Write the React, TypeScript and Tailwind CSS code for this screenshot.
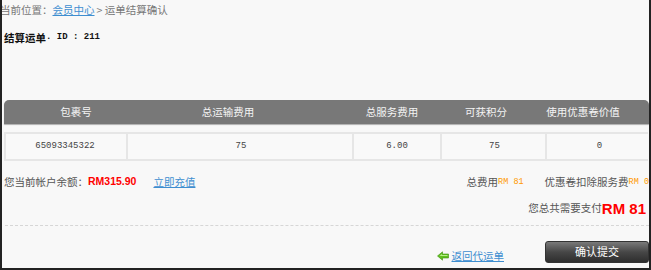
const cjk = "font-['Noto_Sans_CJK_SC','Liberation_Sans',sans-serif]";
const mono = "font-['Liberation_Mono','Noto_Sans_CJK_SC',monospace]";

function BackArrow() {
  return (
    <svg width="12" height="10" viewBox="0 0 12 10" className="shrink-0">
      <path d="M0.5 5 L5.5 0.8 L5.5 3 L11.5 3 L11.5 7 L5.5 7 L5.5 9.2 Z" fill="#5fbf1e" stroke="#3f8f10" strokeWidth="0.6" />
      <path d="M2.5 5 L5 3 L5 4 L10.5 4 L10.5 5 Z" fill="#b8ef8a" />
    </svg>
  );
}

export default function App() {
  return (
    <div className={`h-[270px] w-[651px] overflow-hidden border-b-2 border-l-2 border-r-2 border-[#222] bg-[#f8f8f8] ${cjk} text-[10.5px] text-[#555]`}>
      {/* breadcrumb */}
      <div className="-ml-[2px] flex h-[20px] items-center text-[#777]">
        <span>当前位置：</span>
        <a href="#" className="text-[#3e8ed0] underline">会员中心</a>
        <span className="ml-[2px]">&gt; 运单结算确认</span>
      </div>

      <div className="ml-[2px] mt-[10px] flex h-[15px] items-center font-bold text-[#111]">
        <span>结算运单</span>
        <span className={`${mono} text-[9px]`}>. ID : 211</span>
      </div>

      {/* table header */}
      <div className="ml-[2px] mt-[55px] flex h-[24px] w-[645px] items-center rounded-t-[5px] bg-[#787878] text-[#f4f4f4] shadow-[0_1px_1px_rgba(0,0,0,0.3)]">
        <div className="w-[144px] text-center">包裹号</div>
        <div className="w-[160px] text-center">总运输费用</div>
        <div className="ml-[42px] w-[84px] text-center">总服务费用</div>
        <div className="w-[104px] text-center">可获积分</div>
        <div className="w-[90px] text-center">使用优惠卷价值</div>
      </div>

      {/* data row */}
      <div className={`ml-[2px] mt-[8px] flex h-[29px] w-[644px] border-y-2 border-l-2 border-[#e6e6e6] bg-[#f9f9f9] ${mono} text-[9px] text-[#444]`}>
        <div className="flex w-[122px] items-center justify-center border-r-2 border-[#e6e6e6] pr-[2px]">65093345322</div>
        <div className="flex w-[226px] items-center justify-center border-r-2 border-[#e6e6e6] pl-[2px]">75</div>
        <div className="flex w-[88px] items-center justify-center border-r-2 border-[#e6e6e6]">6.00</div>
        <div className="flex w-[105px] items-center justify-center border-r-2 border-[#e6e6e6] pl-[2px]">75</div>
        <div className="flex flex-1 items-center justify-center pl-[4px]">0</div>
      </div>

      {/* balance line */}
      <div className="ml-[2px] mt-[13px] flex h-[16px] items-center">
        <span>您当前帐户余额：</span>
        <span className="font-['Liberation_Sans',sans-serif] text-[10.5px] font-bold text-[#ff0000]">RM315.90</span>
        <a href="#" className="ml-[17px] text-[#3e8ed0] underline">立即充值</a>
        <span className="ml-auto">总费用</span>
        <span className={`${mono} text-[8.5px] text-[#ff9900]`}>RM 81</span>
        <span className="ml-[21px]">优惠卷扣除服务费</span>
        <span className={`${mono} whitespace-nowrap text-[8.5px] text-[#ff9900]`}>RM 0</span>
      </div>

      {/* total pay */}
      <div className="mt-[10px] flex h-[16px] items-center justify-end pr-[3px]">
        <span>您总共需要支付</span>
        <span className="font-['Liberation_Sans',sans-serif] text-[15px] font-bold leading-none text-[#ff0000]">RM 81</span>
      </div>

      <div className="ml-[3px] mt-[9px] border-t border-dashed border-[#d6d6d6]" />

      {/* actions */}
      <div className="mt-[15px] flex items-start justify-end">
        <a href="#" className="mt-[7px] flex items-center gap-[3px] text-[#3e8ed0] underline">
          <BackArrow />
          <span>返回代运单</span>
        </a>
        <button className="ml-[41px] flex h-[22px] w-[104px] items-start justify-center rounded-[3px] border border-[#333] bg-gradient-to-b from-[#7a7a7a] via-[#474747] to-[#2e2e2e] pt-[1px] text-[11px] text-white">
          确认提交
        </button>
      </div>
    </div>
  );
}
